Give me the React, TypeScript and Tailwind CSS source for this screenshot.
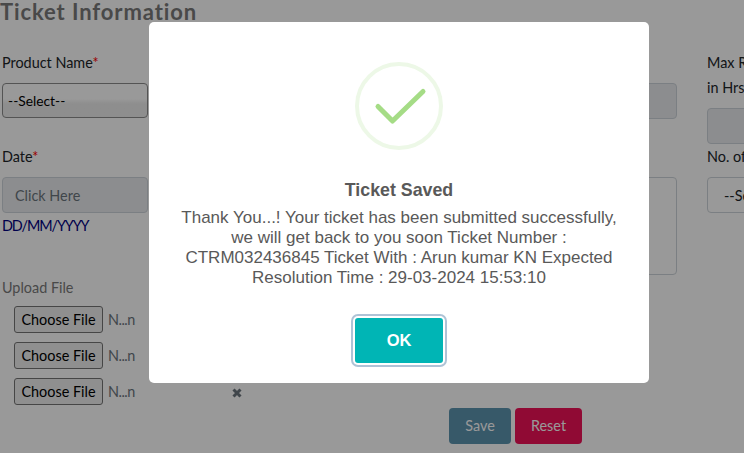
import clsx from "clsx";
import { FC, ReactNode } from "react";

const FILE_ROWS = [1, 2, 3];

export default function App() {
  return (
    <div className="relative h-[453px] w-[744px] overflow-hidden bg-white font-['Lato','Open_Sans',sans-serif] text-[14.4px] text-[#212529]">
      <TicketForm />
      <div className="absolute inset-0 flex items-start justify-center bg-black/40 pt-[22px] pl-[54px]">
        <SavedDialog />
      </div>
    </div>
  );
}

const TicketForm: FC = () => (
  <div className="w-[853px] pl-0.5">
    <h1 className="-ml-0.5 h-[51px] text-[22px] leading-6 font-bold tracking-[0.9px] whitespace-nowrap text-[#7a7a7a]">
      Ticket Information
    </h1>

    <div className="flex gap-[30px]">
      <div className="w-[146px] shrink-0">
        <Label required>Product Name</Label>
        <div className="mt-2 flex h-[35px] items-center rounded-[4px] border border-[#8c8c8c] bg-linear-to-b from-white from-45% to-[#ededed] to-60% px-[5px] pt-px text-[13.8px] text-black">
          --Select--
        </div>
        <div className="mt-[27px]">
          <Label required>Date</Label>
        </div>
        <Field className="mt-2 bg-[#e9ecef] px-3 text-[#6c757d]">
          Click Here
        </Field>
        <p className="mt-px leading-6 tracking-[-1.1px] text-[#000080]">
          DD/MM/YYYY
        </p>
        <p className="mt-[38px] leading-6 text-[#7a7a7a]">Upload File</p>
      </div>

      <div className="w-[499px] shrink-0 pt-8">
        <Field className="bg-[#e9ecef]" />
        <div className="mt-[58px] h-[98px] rounded-[4px] border border-[#ced4da]" />
      </div>

      <div className="-mt-px w-[146px] shrink-0">
        <p className="leading-[25px] whitespace-nowrap">
          Max Resolution
          <br />
          in Hrs
        </p>
        <Field className="mt-2 bg-[#e9ecef]" />
        <div className="pt-px">
          <Label>No. of Users</Label>
        </div>
        <Field className="mt-2 px-4">--Select--</Field>
      </div>
    </div>

    <ul className="mt-[6px] ml-3 space-y-[9px]">
      {FILE_ROWS.map((row) => (
        <li key={row} className="flex h-[27px] items-center">
          <button className="h-[27px] w-[89px] rounded-[3px] border border-[#767676] bg-[#efefef] text-[14.4px] text-black">
            Choose File
          </button>
          <span className="ml-[5px] w-[124px] tracking-[-0.5px] text-[#6c757d]">
            N...n
          </span>
          <RemoveIcon />
        </li>
      ))}
    </ul>

    <div className="mt-[3px] ml-[447px] flex gap-1 text-white">
      <button className="h-9 w-[62px] rounded-[4px] bg-[#5c94af]">Save</button>
      <button className="h-9 w-[67px] rounded-[4px] bg-[#f11158]">Reset</button>
    </div>
  </div>
);

const Label: FC<{ children: ReactNode; required?: boolean }> = ({
  children,
  required,
}) => (
  <p className="leading-6 whitespace-nowrap">
    {children}
    {required && <span className="text-[#ff0000]">*</span>}
  </p>
);

const Field: FC<{ children?: ReactNode; className?: string }> = ({
  children,
  className,
}) => (
  <div
    className={clsx(
      "flex h-9 items-center rounded-[4px] border border-[#ced4da] pt-px",
      className,
    )}
  >
    {children}
  </div>
);

const RemoveIcon: FC = () => (
  <svg width="10" height="10" viewBox="0 0 10 10" className="mt-[3px]">
    <path d="M1.5 1.5 8.5 8.5M8.5 1.5 1.5 8.5" stroke="#6c757d" strokeWidth="3" />
  </svg>
);

const SavedDialog: FC = () => (
  <div className="flex h-[361px] w-[500px] flex-col items-center rounded-[5px] bg-white pt-10 font-['Liberation_Sans',Arial,sans-serif] text-[#595959]">
    <svg width="88" height="88" viewBox="0 0 88 88" fill="none">
      <circle cx="44" cy="44" r="42" stroke="#edf8e7" strokeWidth="4" />
      <path
        d="M23 44.5 37.5 59 68 29.5"
        stroke="#a5dc86"
        strokeWidth="5"
        strokeLinecap="round"
        strokeLinejoin="round"
      />
    </svg>
    <h2 className="mt-[30px] text-[17.8px] leading-5 font-bold">
      Ticket Saved
    </h2>
    <p className="mt-2 text-center text-[17px] leading-5 whitespace-nowrap">
      Thank You...! Your ticket has been submitted successfully,
      <br />
      we will get back to you soon Ticket Number :
      <br />
      CTRM032436845 Ticket With : Arun kumar KN Expected
      <br />
      Resolution Time : 29-03-2024 15:53:10
    </p>
    <button className="mt-[30px] h-[45px] w-[88px] rounded-[3px] bg-[#00b5b5] text-[16.5px] font-bold text-white shadow-[0_0_0_2px_#fff,0_0_0_4px_#aec3d6]">
      OK
    </button>
  </div>
);
